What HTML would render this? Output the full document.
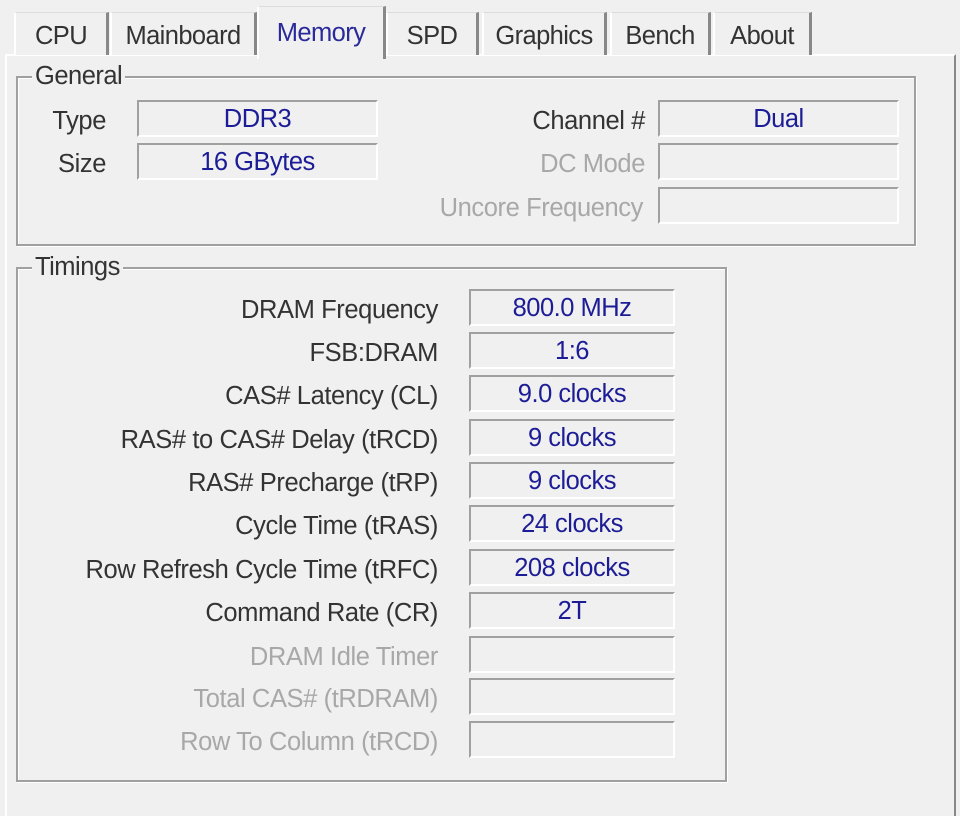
<!DOCTYPE html>
<html><head><style>
body{margin:0;width:960px;height:804px;background:#f0f0f0;position:relative;overflow:hidden;font-family:"Liberation Sans",sans-serif;font-size:25.5px;color:#222;}
.a{position:absolute}
.tab{position:absolute;top:12px;height:42px;border-left:2px solid #fff;border-right:3px solid #888;border-top:1px solid #ddd;background:#f0f0f0;text-align:center;line-height:46px;color:#333;letter-spacing:-0.6px;white-space:nowrap}
.tab.sel{top:6px;height:52px;color:#2a2a9a;line-height:52px;z-index:2}
.panel{position:absolute;left:5px;top:54px;width:947px;height:760px;border-left:2px solid #fff;border-top:2px solid #fff;border-right:2px solid #888}
.grp{position:absolute;border:2px solid #a0a0a0;box-shadow:1px 1px 0 #fff, inset 1px 1px 0 #fff}
.gt{position:absolute;background:#f0f0f0;padding:0 3px;color:#333;top:-16px;left:14px;line-height:28px;letter-spacing:-0.5px}
.f{position:absolute;border-top:2px solid #a0a0a0;border-left:2px solid #a0a0a0;border-bottom:2px solid #fff;border-right:2px solid #fff;height:33px;text-align:center;line-height:35px;color:#1c1c96;letter-spacing:-0.5px;white-space:nowrap}
.l{position:absolute;text-align:right;line-height:40px;color:#333;letter-spacing:-0.4px;white-space:nowrap}
.d{color:#a8a8a8}
</style></head><body>
<div class="panel"></div>
<div class="tab" style="left:14px;width:90px">CPU</div>
<div class="tab" style="left:110px;width:142px">Mainboard</div>
<div class="tab sel" style="left:257px;width:124px">Memory</div>
<div class="tab" style="left:386px;width:88px">SPD</div>
<div class="tab" style="left:482px;width:120px">Graphics</div>
<div class="tab" style="left:610px;width:96px">Bench</div>
<div class="tab" style="left:713px;width:94px">About</div>

<div class="grp" style="left:16px;top:76px;width:896px;height:166px"><div class="gt">General</div></div>
<div class="l" style="left:10px;width:96px;top:101px">Type</div>
<div class="f" style="left:137px;top:100px;width:237px">DDR3</div>
<div class="l" style="left:10px;width:96px;top:144px">Size</div>
<div class="f" style="left:137px;top:143px;width:237px">16 GBytes</div>
<div class="l" style="left:400px;width:245px;top:101px">Channel #</div>
<div class="f" style="left:658px;top:100px;width:237px">Dual</div>
<div class="l d" style="left:400px;width:245px;top:144px">DC Mode</div>
<div class="f" style="left:658px;top:143px;width:237px"></div>
<div class="l d" style="left:400px;width:243px;top:188px">Uncore Frequency</div>
<div class="f" style="left:658px;top:187px;width:237px"></div>

<div class="grp" style="left:16px;top:267px;width:707px;height:511px"><div class="gt">Timings</div></div>

<div class="l" style="left:30px;width:408px;top:290px">DRAM Frequency</div><div class="f" style="left:469px;top:289px;width:202px">800.0 MHz</div>
<div class="l" style="left:30px;width:408px;top:333px">FSB:DRAM</div><div class="f" style="left:469px;top:332px;width:202px">1:6</div>
<div class="l" style="left:30px;width:408px;top:376px">CAS# Latency (CL)</div><div class="f" style="left:469px;top:375px;width:202px">9.0 clocks</div>
<div class="l" style="left:30px;width:408px;top:420px">RAS# to CAS# Delay (tRCD)</div><div class="f" style="left:469px;top:419px;width:202px">9 clocks</div>
<div class="l" style="left:30px;width:408px;top:463px">RAS# Precharge (tRP)</div><div class="f" style="left:469px;top:462px;width:202px">9 clocks</div>
<div class="l" style="left:30px;width:408px;top:506px">Cycle Time (tRAS)</div><div class="f" style="left:469px;top:505px;width:202px">24 clocks</div>
<div class="l" style="left:30px;width:408px;top:550px">Row Refresh Cycle Time (tRFC)</div><div class="f" style="left:469px;top:549px;width:202px">208 clocks</div>
<div class="l" style="left:30px;width:408px;top:593px">Command Rate (CR)</div><div class="f" style="left:469px;top:592px;width:202px">2T</div>
<div class="l d" style="left:30px;width:408px;top:637px">DRAM Idle Timer</div><div class="f" style="left:469px;top:636px;width:202px"></div>
<div class="l d" style="left:30px;width:408px;top:679px">Total CAS# (tRDRAM)</div><div class="f" style="left:469px;top:678px;width:202px"></div>
<div class="l d" style="left:30px;width:408px;top:722px">Row To Column (tRCD)</div><div class="f" style="left:469px;top:721px;width:202px"></div>
</body></html>
